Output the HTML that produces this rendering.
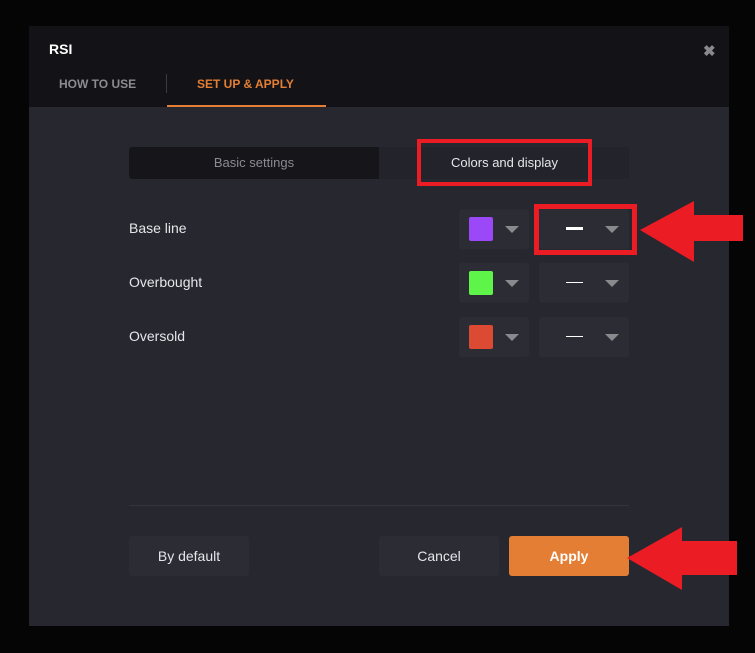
<!DOCTYPE html>
<html><head><style>
body{margin:0;width:755px;height:653px;background:#050505;position:relative;overflow:hidden;font-family:"Liberation Sans",sans-serif;}
.a{position:absolute;}
.modal{left:29px;top:26px;width:700px;height:600px;background:#26272f;}
.hdr{left:0;top:0;width:700px;height:81px;background:#131317;}
.sw{width:24px;height:24px;border-radius:2px;}
.box{background:#2b2c34;border-radius:3px;}
.tri{width:0;height:0;border-left:7px solid transparent;border-right:7px solid transparent;border-top:7px solid #8a8a8e;}
.lbl{color:#e6e6ea;font-size:14px;}
.btn{top:510px;width:120px;height:40px;border-radius:3px;font-size:14px;line-height:40px;text-align:center;color:#e6e6ea;background:#2b2c34;}
</style></head><body>
<div class="a modal">
 <div class="a hdr">
  <div class="a" style="left:20px;top:15px;color:#fff;font-weight:bold;font-size:14px">RSI</div>
  <div class="a" style="left:30px;top:51px;color:#8b8b90;font-weight:bold;font-size:12px">HOW TO USE</div>
  <div class="a" style="left:137px;top:48px;width:1px;height:19px;background:#3a3a40"></div>
  <div class="a" style="left:168px;top:51px;color:#e47e35;font-weight:bold;font-size:12px">SET UP &amp; APPLY</div>
  <div class="a" style="left:138px;top:79px;width:159px;height:2px;background:#e47e35"></div>
  <div class="a" style="left:674px;top:16px;color:#8a8a8e;font-size:15px;font-weight:bold">✖</div>
 </div>
 <div class="a" style="left:100px;top:121px;width:250px;height:32px;background:#16161a;border-radius:3px 0 0 3px;color:#8a8a90;font-size:13px;line-height:32px;text-align:center">Basic settings</div>
 <div class="a" style="left:350px;top:121px;width:250px;height:32px;background:#23242b;color:#e6e6ea;font-size:13px;line-height:32px;text-align:center"></div>
 <div class="a" style="left:388px;top:113px;width:167px;height:39px;border:4px solid #ec1c24;color:#e6e6ea;font-size:13px;line-height:39px;text-align:center">Colors and display</div>

 <div class="a lbl" style="left:100px;top:194px">Base line</div>
 <div class="a lbl" style="left:100px;top:248px">Overbought</div>
 <div class="a lbl" style="left:100px;top:302px">Oversold</div>

 <div class="a box" style="left:430px;top:183px;width:70px;height:40px"></div>
 <div class="a sw" style="left:440px;top:191px;background:#9a48f8"></div>
 <div class="a tri" style="left:476px;top:200px"></div>
 <div class="a box" style="left:510px;top:183px;width:90px;height:40px"></div>
 <div class="a" style="left:537px;top:201px;width:17px;height:3px;background:#fff"></div>
 <div class="a tri" style="left:576px;top:200px"></div>
 <div class="a" style="left:505px;top:178px;width:93px;height:41px;border:5px solid #ec1c24"></div>

 <div class="a box" style="left:430px;top:237px;width:70px;height:40px"></div>
 <div class="a sw" style="left:440px;top:245px;background:#5ef44a"></div>
 <div class="a tri" style="left:476px;top:254px"></div>
 <div class="a box" style="left:510px;top:237px;width:90px;height:40px"></div>
 <div class="a" style="left:537px;top:256px;width:17px;height:1px;background:#fff"></div>
 <div class="a tri" style="left:576px;top:254px"></div>

 <div class="a box" style="left:430px;top:291px;width:70px;height:40px"></div>
 <div class="a sw" style="left:440px;top:299px;background:#dc4a33"></div>
 <div class="a tri" style="left:476px;top:308px"></div>
 <div class="a box" style="left:510px;top:291px;width:90px;height:40px"></div>
 <div class="a" style="left:537px;top:310px;width:17px;height:1px;background:#fff"></div>
 <div class="a tri" style="left:576px;top:308px"></div>

 <div class="a" style="left:100px;top:479px;width:500px;height:1px;background:#33343c"></div>
 <div class="a btn" style="left:100px">By default</div>
 <div class="a btn" style="left:350px">Cancel</div>
 <div class="a btn" style="left:480px;background:#e47e35;color:#fff;font-weight:bold">Apply</div>
</div>
<svg class="a" style="left:0;top:0" width="755" height="653">
 <polygon points="640,230 694,201 694,215 743,215 743,241 694,241 694,262" fill="#ec1c24"/>
 <polygon points="627,558 682,527 682,541 737,541 737,575 682,575 682,590" fill="#ec1c24"/>
</svg>
</body></html>
